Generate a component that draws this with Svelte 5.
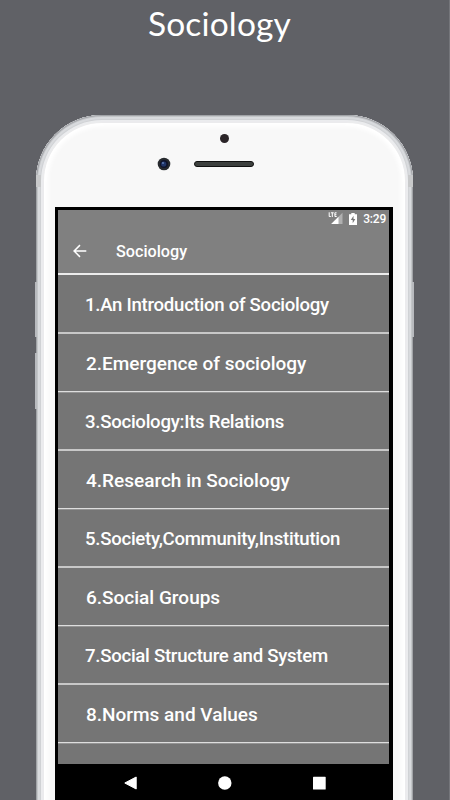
<script>
    const chapters = [
        "1.An Introduction of Sociology",
        "2.Emergence of sociology",
        "3.Sociology:Its Relations",
        "4.Research in Sociology",
        "5.Society,Community,Institution",
        "6.Social Groups",
        "7.Social Structure and System",
        "8.Norms and Values"
    ];
</script>

<main class="promo">
    <h1>Sociology</h1>

    <div class="phone">
        <!-- Side buttons, they stick out of the frame -->
        <span class="side mute"></span>
        <span class="side volume"></span>
        <span class="side power"></span>
        <span class="band left"></span>
        <span class="band right"></span>

        <div class="bezel">
            <div class="sensor"></div>
            <div class="earpiece">
                <svg class="camera" width="14" height="14" viewBox="0 0 14 14">
                    <circle cx="7" cy="7" r="6.3" fill="#272a2e" />
                    <circle cx="7" cy="7" r="4" fill="#10142a" />
                    <circle cx="6.7" cy="7" r="2.6" fill="#203568" />
                    <circle cx="6" cy="6" r="0.9" fill="#6584bd" />
                </svg>
                <div class="speaker"></div>
            </div>
        </div>

        <div class="screen">
            <div class="status">
                <svg width="16" height="13" viewBox="0 0 16 13">
                    <path d="M14.5 .8V12H3.2z" fill="#b0b0b0" />
                    <path d="M10.5 4.7V12H3.2z" fill="#fff" />
                    <path d="M1.2 .3v4.2h1.6M2.9 .8h2.8M4.3 .8v4.2M8.6 .8H6.9v3.7h1.8M6.9 2.7h1.5" fill="none" stroke="#fff" stroke-width="1" />
                </svg>
                <svg class="battery" width="8" height="12" viewBox="0 0 8 12">
                    <path d="M2.3 0h3.4v1.2H8V12H0V1.2h2.3z" fill="#fff" />
                    <path d="M4.5 2.8L1.8 7h1.9v3.2L6.3 6H4.5z" fill="#777" />
                </svg>
                <span>3:29</span>
            </div>
            <header>
                <svg width="14" height="14" viewBox="0 0 14 14" fill="none" stroke="#fff" stroke-width="1.5">
                    <path d="M13.3 7H1.4M7 1.1L1.1 7L7 12.9" />
                </svg>
                <span>Sociology</span>
            </header>
            <ul>
                {#each chapters as chapter}
                    <li><span>{chapter}</span></li>
                {/each}
            </ul>
            <nav>
                <svg width="14" height="14" viewBox="0 0 14 14"><path d="M12.2 1v12L.8 7z" fill="#fff" stroke="#fff" stroke-linejoin="round" /></svg>
                <svg width="14" height="14" viewBox="0 0 14 14"><circle cx="6.8" cy="7" r="6.7" fill="#fff" /></svg>
                <svg width="14" height="14" viewBox="0 0 14 14"><rect x="1" y=".8" width="12.7" height="12.7" rx=".6" fill="#fff" /></svg>
            </nav>
        </div>
    </div>
</main>

<style>
    :global(body) {
        background: #606166;
    }

    .promo {
        box-sizing: border-box;
        width: 450px;
        height: 800px;
        overflow: hidden;
        background: #606166;
        border-right: 1px solid #75767b;
        font-family: Roboto, sans-serif;
        color: #fff;
    }

    h1 {
        height: 115px;
        margin: 0;
        padding: 1px 0 0 148px;
        box-sizing: border-box;
        font: 400 33.5px/45px Lato, sans-serif;
        letter-spacing: 0.15px;
    }

    .phone {
        position: relative;
        box-sizing: border-box;
        width: 377px;
        height: 760px;
        margin-left: 36px;
        padding: 0 20px 0 19px;
        border-radius: 66px 66px 0 0;
        background: #f8f8f8;
        /* Metal rim, from the outer edge inwards */
        box-shadow:
            inset 0 0 1px 1px #9d9fa3,
            inset 0 0 0 2px #c8cacd,
            inset 0 0 1px 4px #d9dbde,
            inset 0 0 0 5px #cfd1d4,
            inset 0 0 1px 7px #ebecee,
            inset 0 0 0 8px #ececed,
            inset 0 0 4px 12px #fff;
    }

    .side {
        position: absolute;
        width: 2px;
        background: #b8babe;
    }

    .mute {
        left: -1px;
        top: 167px;
        height: 55px;
    }

    .volume {
        left: -1px;
        top: 238px;
        height: 56px;
    }

    .power {
        right: -1px;
        top: 167px;
        height: 55px;
    }

    .band {
        position: absolute;
        top: 60px;
        width: 5px;
        height: 12px;
        background: #c8c9ca;
    }

    .band.left {
        left: 0;
    }

    .band.right {
        right: 0;
    }

    .bezel {
        height: 92px;
        padding-top: 19px;
        box-sizing: border-box;
    }

    .sensor {
        width: 9px;
        height: 9px;
        margin-left: 165px;
        border-radius: 50%;
        background: #2b2528;
    }

    .earpiece {
        display: flex;
        align-items: center;
        gap: 23px;
        margin: 14px 0 0 102px;
    }

    .speaker {
        box-sizing: border-box;
        width: 60px;
        height: 6px;
        border: 1px solid #111;
        border-radius: 3px;
        background: #3d403e;
    }

    .screen {
        display: flex;
        flex-direction: column;
        width: 338px;
        height: 593px;
        box-sizing: border-box;
        border: solid #000;
        border-width: 3px 4px 0 3px;
        background: #757575;
    }

    .status {
        display: flex;
        align-items: center;
        justify-content: flex-end;
        height: 17px;
        padding-right: 3px;
        background: #808080;
        font-size: 12px;
        font-weight: 500;
        letter-spacing: -0.2px;
    }

    .battery {
        margin: 0 6px 0 5px;
    }

    header {
        display: flex;
        align-items: center;
        gap: 29px;
        height: 48px;
        box-sizing: border-box;
        padding: 2px 0 0 15px;
        border-bottom: 2px solid #ececec;
        background: #808080;
        font-size: 16.2px;
        font-weight: 500;
    }

    ul {
        height: 489px;
        margin: 0;
        padding: 0;
        list-style: none;
    }

    li {
        display: flex;
        align-items: center;
        height: 59px;
        box-sizing: border-box;
        padding: 3px 0 0 27px;
        border-bottom: 2px solid #c8c8c8;
        font-size: 18.6px;
        font-weight: 500;
        letter-spacing: -0.27px;
        white-space: nowrap;
    }

    li:nth-child(even) {
        height: 58px;
        padding: 1px 0 0 28px;
        border-bottom: 1px solid #dedede;
        box-shadow: 0 1px #949494;
        font-size: 19px;
        letter-spacing: 0;
    }

    nav {
        display: flex;
        justify-content: center;
        gap: 80px;
        flex: 1;
        padding: 12px 0 0 2px;
        background: #000;
    }
</style>
